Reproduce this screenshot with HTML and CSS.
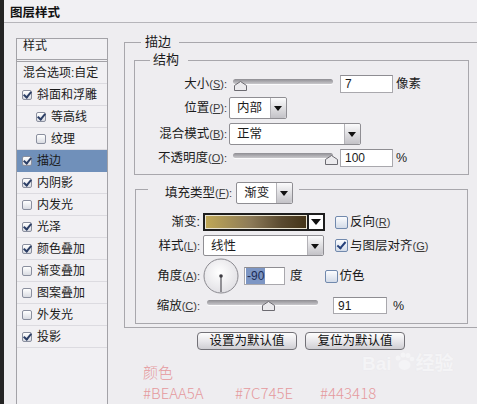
FILE: index.html
```html
<!DOCTYPE html>
<html lang="zh-CN">
<head>
  <meta charset="UTF-8" />
  <title>图层样式</title>
  <link rel="stylesheet" href="styles.css">
</head>
<body>
  <div class="window">
    <div class="titlebar">图层样式</div>

    <div class="main">
      <ul class="styles-list">
        <li class="head">样式</li>
        <li class="plain">混合选项:自定</li>
        <li><span class="cb on"></span>斜面和浮雕</li>
        <li class="sub"><span class="cb on"></span>等高线</li>
        <li class="sub"><span class="cb"></span>纹理</li>
        <li class="active"><span class="cb on"></span>描边</li>
        <li><span class="cb on"></span>内阴影</li>
        <li><span class="cb"></span>内发光</li>
        <li><span class="cb on"></span>光泽</li>
        <li><span class="cb on"></span>颜色叠加</li>
        <li><span class="cb"></span>渐变叠加</li>
        <li><span class="cb"></span>图案叠加</li>
        <li><span class="cb"></span>外发光</li>
        <li><span class="cb on"></span>投影</li>
      </ul>

      <div class="content">
        <fieldset class="group outer">
          <legend>描边</legend>

          <fieldset class="group struct">
            <legend>结构</legend>

            <div class="row h18">
              <span class="lbl">大小<span class="key">(<u>S</u>):</span></span>
              <div class="slider w100">
                <div class="track"></div>
                <svg class="knob" style="left:1px" width="13" height="10" viewBox="0 0 13 10"><polygon points="0.5,9.5 0.5,4.5 6.5,0.5 12.5,4.5 12.5,9.5" /></svg>
              </div>
              <div class="field f-size">7</div>
              <span class="unit">像素</span>
            </div>

            <div class="row">
              <span class="lbl">位置<span class="key">(<u>P</u>):</span></span>
              <div class="select w58"><span class="val">内部</span><span class="drop"></span></div>
            </div>

            <div class="row">
              <span class="lbl">混合模式<span class="key">(<u>B</u>):</span></span>
              <div class="select w132"><span class="val">正常</span><span class="drop"></span></div>
            </div>

            <div class="row h18">
              <span class="lbl">不透明度<span class="key">(<u>O</u>):</span></span>
              <div class="slider w100">
                <div class="track"></div>
                <svg class="knob" style="left:92px" width="13" height="10" viewBox="0 0 13 10"><polygon points="0.5,9.5 0.5,4.5 6.5,0.5 12.5,4.5 12.5,9.5" /></svg>
              </div>
              <div class="field f-size">100</div>
              <span class="unit">%</span>
            </div>
          </fieldset>

          <fieldset class="group fill">
            <legend>
              <span class="lbl-inline">填充类型<span class="key">(<u>F</u>):</span></span>
              <div class="select w57"><span class="val">渐变</span><span class="drop"></span></div>
            </legend>

            <div class="row h18">
              <span class="lbl narrow">渐变:</span>
              <div class="gradient">
                <div class="swatch"></div>
                <span class="gbtn"></span>
              </div>
              <span class="check"><span class="box"></span>反向<span class="key">(<u>R</u>)</span></span>
            </div>

            <div class="row r-style">
              <span class="lbl narrow">样式<span class="key">(<u>L</u>):</span></span>
              <div class="select w121"><span class="val">线性</span><span class="drop"></span></div>
              <span class="check"><span class="box on"></span>与图层对齐<span class="key">(<u>G</u>)</span></span>
            </div>

            <div class="row r-angle">
              <span class="lbl narrow">角度<span class="key">(<u>A</u>):</span></span>
              <svg class="dial" width="36" height="36" viewBox="0 0 36 36">
                <defs>
                  <radialGradient id="dialFill" cx="0.45" cy="0.4" r="0.6">
                    <stop offset="0" stop-color="#ffffff" />
                    <stop offset="1" stop-color="#e2e1e5" />
                  </radialGradient>
                </defs>
                <circle cx="18" cy="18" r="17" fill="url(#dialFill)" stroke="#8b8a90" />
                <line x1="18" y1="18" x2="18" y2="34" stroke="#6a696f" stroke-width="1.4" />
                <circle cx="18" cy="18" r="1.8" fill="#3d3c42" />
              </svg>
              <div class="field f-angle"><span class="sel">-90</span></div>
              <span class="unit deg">度</span>
              <span class="check dither"><span class="box"></span>仿色</span>
            </div>

            <div class="row r-scale">
              <span class="lbl narrow">缩放<span class="key">(<u>C</u>):</span></span>
              <div class="slider w111">
                <div class="track"></div>
                <svg class="knob" style="left:55px" width="13" height="10" viewBox="0 0 13 10"><polygon points="0.5,9.5 0.5,4.5 6.5,0.5 12.5,4.5 12.5,9.5" /></svg>
              </div>
              <div class="field f-scale">91</div>
              <span class="unit pct">%</span>
            </div>
          </fieldset>
        </fieldset>

        <div class="buttons">
          <button type="button">设置为默认值</button>
          <button type="button">复位为默认值</button>
        </div>

        <div class="note">
          <div class="note-title">颜色</div>
          <div class="hex-row">
            <span class="hex">#BEAA5A</span>
            <span class="hex">#7C745E</span>
            <span class="hex">#443418</span>
          </div>
        </div>
      </div>
    </div>

    <div class="watermark">
      <span>Bai</span>
      <svg width="22" height="20" viewBox="0 0 22 20"><circle cx="5" cy="6" r="2.5" /><circle cx="10" cy="3" r="2.5" /><circle cx="15" cy="3.5" r="2.5" /><circle cx="19" cy="7" r="2.3" /><ellipse cx="11.5" cy="13" rx="6" ry="5" /></svg>
      <span>经验</span>
    </div>
  </div>
</body>
</html>
```

FILE: styles.css
```css
body {
  margin: 0;
  background-color: #1f1f1f;
  font-family: "Liberation Sans", "Noto Sans CJK SC", sans-serif;
  font-size: 12.5px;
  color: #1b1b1b;
}

.window {
  position: relative;
  width: 477px;
  height: 404px;
  overflow: hidden;
  box-sizing: border-box;
  border-left: 4px solid #242424;
  background-color: #eeedf0;
}

.titlebar {
  height: 18px;
  padding: 4px 0 0 6px;
  line-height: 19px;
  font-size: 12.5px;
  font-weight: bold;
  color: #111;
  background-color: #f1f0f3;
  border-bottom: 1px solid #b6b5ba;
}

.main {
  display: flex;
  align-items: flex-start;
}

/* left list of effects */

.styles-list {
  list-style: none;
  flex: none;
  margin: 15px 0 0 12px;
  padding: 0;
  width: 92px;
  height: 380px;
  box-sizing: border-box;
  border: 1px solid #a3a2a7;
  border-bottom: none;
  background-color: #f1f0f3;
  font-size: 12px;
}

.styles-list li {
  display: flex;
  align-items: center;
  height: 21px;
  line-height: 20px;
  padding-left: 5px;
  border-bottom: 1px solid #dcdbe0;
  white-space: nowrap;
}

.styles-list li.head {
  height: 20px;
  align-items: flex-start;
  line-height: 15px;
  padding-left: 6px;
  border-bottom: 3px double #a3a2a7;
}

.styles-list li.plain {
  padding-left: 6px;
}

.styles-list li.sub {
  padding-left: 19px;
}

.styles-list li.active {
  background-color: #7090ba;
  border-bottom-color: #7090ba;
}

.cb {
  position: relative;
  width: 10px;
  height: 10px;
  margin-right: 5px;
  flex: none;
  box-sizing: border-box;
  border: 1px solid #8a8f9e;
  border-radius: 2px;
  background: linear-gradient(#ffffff, #d9dbe2);
}

.cb.on::after {
  content: "";
  position: absolute;
  left: 2px;
  top: -1px;
  width: 3px;
  height: 6px;
  border-right: 2px solid #2c3f66;
  border-bottom: 2px solid #2c3f66;
  transform: rotate(40deg);
}

/* right side */

.content {
  flex: none;
  margin: 11px 0 0 16px;
}

.group {
  margin: 0;
  padding: 0;
  min-inline-size: 0;
  border: 1px solid #a8a7ac;
}

.group legend {
  padding: 0;
  line-height: 16px;
  font-size: 13px;
}

.outer {
  width: 360px;
  box-sizing: border-box;
  padding: 2px 0 3px 9px;
}

.outer > legend {
  margin-left: 7px;
  padding: 0 8px 0 4px;
}

.struct {
  width: 335px;
  box-sizing: border-box;
  padding: 7px 0 7px 0;
}

.struct > legend {
  margin-left: 15px;
  padding: 0 9px 0 3px;
}

.fill {
  width: 333px;
  box-sizing: border-box;
  margin-left: 1px;
  padding: 9px 0 9px 0;
}

.fill > legend {
  display: flex;
  align-items: center;
  margin-left: 12px;
  padding: 7px 6px 0 17px;
  font-size: 12.5px;
}

.lbl-inline {
  margin-right: 4px;
}

.row {
  display: flex;
  align-items: center;
  height: 22px;
  margin-top: 4px;
  white-space: nowrap;
}

.row:first-of-type {
  margin-top: 0;
}

.row.h18 {
  height: 18px;
}

.lbl {
  width: 92px;
  margin-right: 2px;
  text-align: right;
  line-height: 16px;
  flex: none;
}

.lbl.narrow {
  width: 64px;
  margin-right: 3px;
}

.key {
  font-size: 11px;
  color: #3a3a3a;
}

.key u {
  text-decoration-thickness: 1px;
  text-underline-offset: 1px;
}

/* sliders */

.slider {
  position: relative;
  height: 18px;
  margin-left: 4px;
  flex: none;
}

.w100 { width: 100px; }
.w111 { width: 111px; }

.track {
  height: 5px;
  margin-top: 4px;
  border-radius: 3px;
  background: linear-gradient(#8e8d92, #c9c8cc);
  box-shadow: 0 1px 0 #fbfbfc;
}

.knob {
  position: absolute;
  top: 6px;
}

.knob polygon {
  fill: #ebeaed;
  stroke: #6c6b71;
  stroke-width: 1;
}

/* text fields */

.field {
  height: 18px;
  box-sizing: border-box;
  padding-left: 4px;
  line-height: 16px;
  font-size: 12px;
  border: 1px solid #a9a8ad;
  border-top-color: #8e8d92;
  background-color: #fff;
  flex: none;
}

.f-size {
  width: 53px;
  margin-left: 7px;
}

.unit {
  margin-left: 3px;
  line-height: 16px;
}

/* selects */

.select {
  display: flex;
  height: 22px;
  box-sizing: border-box;
  border: 1px solid #8f8e93;
  border-radius: 2px;
  background-color: #fff;
  flex: none;
}

.w57 { width: 57px; }
.w58 { width: 58px; }
.w121 { width: 121px; height: 21px; }
.w132 { width: 132px; }

.select .val {
  flex: 1;
  padding-left: 7px;
  line-height: 20px;
}

.drop {
  position: relative;
  width: 15px;
  border-left: 1px solid #b3b2b7;
  border-radius: 0 2px 2px 0;
  background: linear-gradient(#fbfbfc, #c3c2c7);
}

.drop::after {
  content: "";
  position: absolute;
  left: 3px;
  top: 50%;
  margin-top: -2px;
  border-left: 4px solid transparent;
  border-right: 4px solid transparent;
  border-top: 5px solid #111;
}

/* gradient picker */

.gradient {
  display: flex;
  width: 122px;
  height: 18px;
  box-sizing: border-box;
  border: 2px solid #1e1e1e;
  flex: none;
}

.swatch {
  flex: 1;
  background: linear-gradient(to right, #c0a856, #8c7a58 45%, #5a4a30 75%, #443418);
  box-shadow: inset 0 0 0 1px #e9e4d2;
}

.gbtn {
  position: relative;
  width: 14px;
  border-left: 2px solid #1e1e1e;
  background-color: #fff;
}

.gbtn::after {
  content: "";
  position: absolute;
  left: 2px;
  top: 4px;
  border-left: 5px solid transparent;
  border-right: 5px solid transparent;
  border-top: 6px solid #111;
}

/* checkboxes */

.check {
  display: flex;
  align-items: center;
  margin-left: 10px;
  line-height: 16px;
}

.box {
  position: relative;
  width: 13px;
  height: 13px;
  margin-right: 2px;
  box-sizing: border-box;
  border: 1px solid #7189ad;
  border-radius: 2px;
  background: linear-gradient(#fbfcfe, #d3dbe8);
}

.box.on::after {
  content: "";
  position: absolute;
  left: 3px;
  top: 0;
  width: 3px;
  height: 7px;
  border-right: 2px solid #25407a;
  border-bottom: 2px solid #25407a;
  transform: rotate(40deg);
}

.r-style {
  height: 21px;
}

.r-style .check {
  margin-left: 11px;
}

.r-angle {
  height: 34px;
  margin-top: 3px;
}

.dial {
  margin-left: 0;
  flex: none;
}

.f-angle {
  width: 41px;
  margin-left: 5px;
  padding-left: 1px;
}

.sel {
  display: inline-block;
  padding: 0 1px;
  line-height: 16px;
  color: #1c2d58;
  background-color: #7d96c4;
}

.deg {
  margin-left: 5px;
}

.check.dither {
  margin-left: 22px;
}

.r-scale {
  height: 17px;
}

.r-scale .track {
  margin-top: 3px;
}

.r-scale .knob {
  top: 4px;
}

.f-scale {
  width: 54px;
  height: 17px;
  margin-left: 15px;
}

.unit.pct {
  margin-left: 6px;
}

/* buttons */

.buttons {
  display: flex;
  gap: 8px;
  margin-top: 4px;
  padding-left: 73px;
}

button {
  width: 100px;
  height: 18px;
  padding: 0;
  font-family: "Liberation Sans", "Noto Sans CJK SC", sans-serif;
  font-size: 12.5px;
  line-height: 16px;
  color: #111;
  border: 1px solid #727177;
  border-radius: 4px;
  background: linear-gradient(#fdfdfd, #e6e5e9 55%, #cfced3);
}

/* colour notes */

.note {
  margin-top: 12px;
  padding-left: 19px;
  font-family: "Noto Sans CJK SC", "Liberation Sans", sans-serif;
  font-size: 15px;
  font-weight: 300;
  color: #e59a9e;
}

.note-title {
  line-height: 20px;
}

.hex-row {
  display: flex;
  line-height: 22px;
}

.hex {
  width: 92px;
}

.hex + .hex {
  width: 85px;
}

.watermark {
  position: absolute;
  left: 358px;
  top: 352px;
  display: flex;
  align-items: flex-end;
  gap: 1px;
  font-size: 19px;
  font-weight: bold;
  line-height: 22px;
  color: #fbfbfc;
  text-shadow: 0 0 1px #e2e1e5;
  opacity: 0.5;
}

.watermark svg {
  fill: #fbfbfc;
  margin-bottom: 3px;
}
```
